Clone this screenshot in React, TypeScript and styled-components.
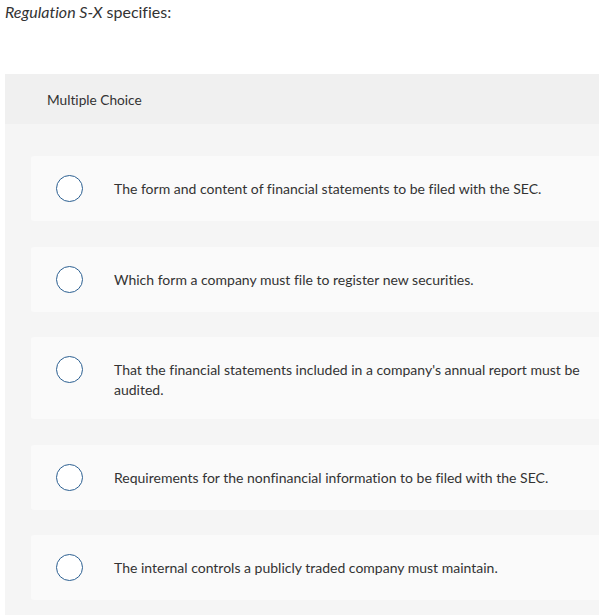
import React from "react";
import styled, { createGlobalStyle } from "styled-components";

const Global = createGlobalStyle`
  html, body { margin: 0; padding: 0; background: #ffffff; }
  body {
    font-family: Lato, "Open Sans", sans-serif;
    color: #333333;
    font-variant-ligatures: none;
  }
`;

const Page = styled.div`
  padding: 0 0 0 5px;
`;

const Prompt = styled.p`
  margin: 0;
  padding-top: 1px;
  font-size: 16px;
  line-height: 22px;
  color: #333333;
  height: 73px;
  em { font-style: italic; }
`;

const Panel = styled.section`
  background: #f5f5f5;
  display: flex;
  flex-direction: column;
`;

const PanelHeader = styled.div`
  height: 50px;
  background: #f0f0f0;
  display: flex;
  align-items: center;
  padding-left: 42px;
  font-size: 13.7px;
  color: #333333;
`;

const OptionList = styled.div`
  display: flex;
  flex-direction: column;
  gap: 25.5px;
  padding: 32px 0 30px 26px;
`;

const Option = styled.label`
  display: flex;
  align-items: flex-start;
  background: #fafafa;
  border-radius: 3px 0 0 3px;
  padding: 19px 14px 19px 25px;
  cursor: pointer;
`;

const Radio = styled.span`
  flex: 0 0 auto;
  width: 25px;
  height: 25px;
  border-radius: 50%;
  border: 1.6px solid #2b5f91;
  background: #ffffff;
`;

const OptionText = styled.span`
  margin-left: 31px;
  margin-top: 4px;
  font-size: 14px;
  line-height: 20px;
  color: #333333;
`;

const options = [
  "The form and content of financial statements to be filed with the SEC.",
  "Which form a company must file to register new securities.",
  "That the financial statements included in a company's annual report must be audited.",
  "Requirements for the nonfinancial information to be filed with the SEC.",
  "The internal controls a publicly traded company must maintain.",
];

export default function App() {
  return (
    <>
      <Global />
      <Page>
        <Prompt>
          <em>Regulation S-X</em> specifies:
        </Prompt>
        <Panel>
          <PanelHeader>Multiple Choice</PanelHeader>
          <OptionList>
            {options.map((o) => (
              <Option key={o}>
                <Radio />
                <OptionText>{o}</OptionText>
              </Option>
            ))}
          </OptionList>
        </Panel>
      </Page>
    </>
  );
}
